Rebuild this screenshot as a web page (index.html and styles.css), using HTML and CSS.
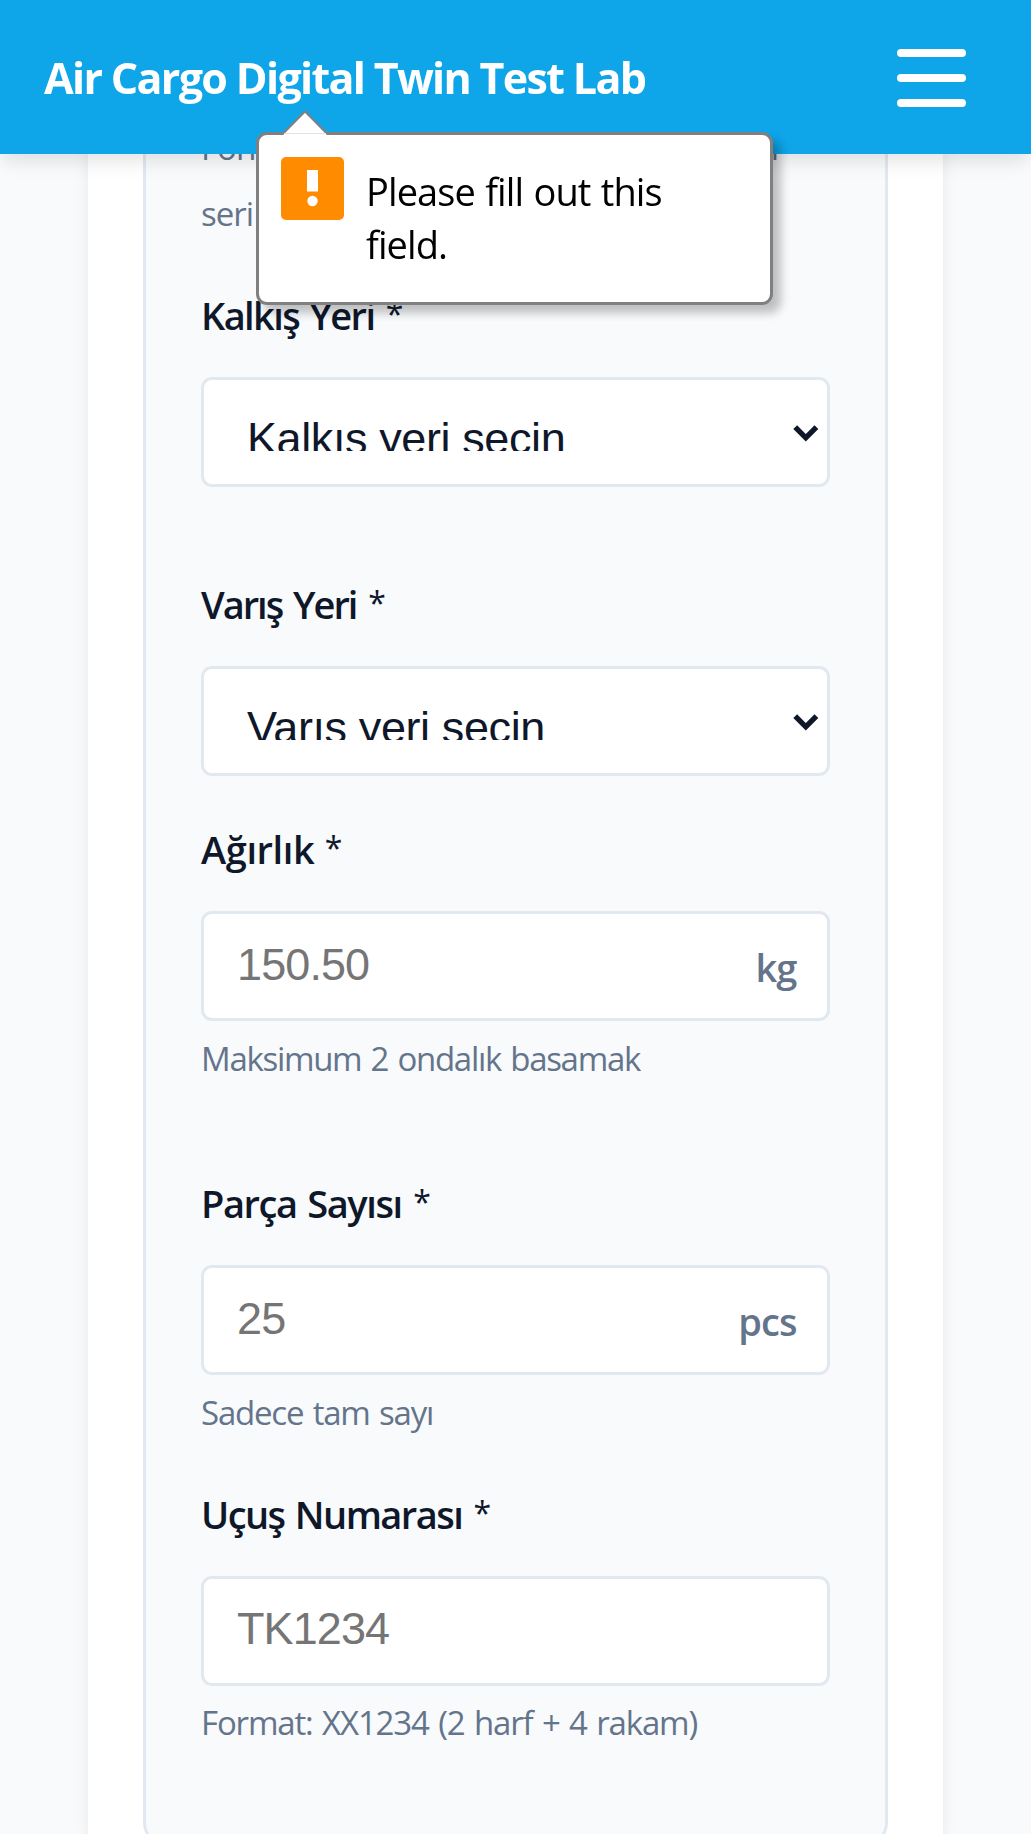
FILE: index.html
```html
<!DOCTYPE html>
<html lang="tr">
<head>
<meta charset="utf-8">
<title>Air Cargo Digital Twin Test Lab</title>
<link rel="stylesheet" href="styles.css">
</head>
<body>
<header class="topbar">
  <div class="brand">Air Cargo Digital Twin Test Lab</div>
  <div class="burger"><span></span><span></span><span></span></div>
</header>
<main class="card">
  <section class="panel">
    <p class="hint hint-top"><span class="hint-line">Format: 3 haneli prefix + 8 haneli</span>seri</p>
    <div class="field far">
      <label class="label l1">Kalkış Yeri <span class="star">*</span></label>
      <div class="control select"><span class="value">Kalkış yeri seçin</span>
        <svg class="chevron" viewBox="0 0 26 17"><path d="M2.2 2.2 12.8 12.8 23.4 2.2" fill="none" stroke="#0f172a" stroke-width="5.4"/></svg></div>
    </div>
    <div class="field near">
      <label class="label l2">Varış Yeri <span class="star">*</span></label>
      <div class="control select"><span class="value">Varış yeri seçin</span>
        <svg class="chevron" viewBox="0 0 26 17"><path d="M2.2 2.2 12.8 12.8 23.4 2.2" fill="none" stroke="#0f172a" stroke-width="5.4"/></svg></div>
    </div>
    <div class="field far">
      <label class="label l3">Ağırlık <span class="star">*</span></label>
      <div class="control"><input class="input" placeholder="150.50"><span class="unit">kg</span></div>
      <p class="hint h3">Maksimum 2 ondalık basamak</p>
    </div>
    <div class="field near">
      <label class="label l4">Parça Sayısı <span class="star">*</span></label>
      <div class="control"><input class="input" placeholder="25"><span class="unit">pcs</span></div>
      <p class="hint h4">Sadece tam sayı</p>
    </div>
    <div class="field">
      <label class="label l5">Uçuş Numarası <span class="star">*</span></label>
      <div class="control"><input class="input" placeholder="TK1234"></div>
      <p class="hint h5">Format: XX1234 (2 harf + 4 rakam)</p>
    </div>
  </section>
</main>
<div class="bubble">
  <svg class="bubble-arrow" viewBox="0 0 50 26"><path d="M3 25 25 2 47 25V26H3Z" fill="#fff"/><path d="M2.5 24 25 1.5 47.5 24" fill="none" stroke="#808080" stroke-width="2"/><path d="M4 23.5H46" stroke="#e3e3e3"/></svg>
  <svg class="bubble-icon" viewBox="0 0 63 63"><rect width="63" height="63" rx="5" fill="#ff8c00"/><rect x="26" y="13" width="11" height="21.5" fill="#fff"/><circle cx="31.5" cy="44" r="5.2" fill="#fff"/></svg>
  <div class="bubble-text">Please fill out this field.</div>
</div>
</body>
</html>
```
FILE: styles.css
```css
* { box-sizing: border-box; }
html { height: 1834px; overflow: hidden; }
body {
  margin: 0;
  height: 1834px;
  overflow: hidden;
  position: relative;
  background: #f8fafc;
  color: #0f172a;
  font-family: "Open Sans", "Noto Sans", sans-serif;
}
.topbar {
  position: fixed;
  z-index: 2;
  top: 0;
  left: 0;
  width: 100%;
  height: 154px;
  padding: 2px 65.5px 0 44px;
  display: flex;
  align-items: center;
  justify-content: space-between;
  background: #0ea5e9;
  box-shadow: 0 11px 17px -3px rgba(0, 0, 0, .1);
}
.brand {
  color: #fff;
  font-size: 43px;
  font-weight: 700;
  line-height: 60px;
  letter-spacing: -1.67px;
  white-space: nowrap;
}
.burger { display: flex; flex-direction: column; gap: 16.4px; width: 69px; }
.burger span { height: 8.5px; border-radius: 4px; background: #fff; }
.card {
  width: 855px;
  height: 1834px;
  margin-left: 88px;
  padding: 0 55px;
  overflow: hidden;
  background: #fff;
  box-shadow: 0 11px 17px -3px rgba(0, 0, 0, .1);
}
.panel {
  height: 1846px;
  padding: 115px 55px 0;
  background: #f8fafc;
  border: solid #e2e8f0;
  border-width: 0 3px 3px;
  border-radius: 0 0 23px 23px;
}
.hint {
  margin: 9.7px 0 0;
  color: #64748b;
  font-size: 33px;
  line-height: 55.7px;
  white-space: nowrap;
}
.hint-top { margin: 0 0 36.6px; line-height: 66.2px; letter-spacing: -1px; }
.hint-line { display: block; width: 577px; white-space: normal; text-align-last: justify; }
.h3 { letter-spacing: -1.3px; word-spacing: 2px; }
.h4 { letter-spacing: -1.2px; word-spacing: 2px; }
.h5 { letter-spacing: -1.15px; word-spacing: 2px; }
.field.far { margin-bottom: 86px; }
.field.near { margin-bottom: 42px; }
.label {
  display: block;
  margin-bottom: 30px;
  font-size: 38px;
  font-weight: 600;
  line-height: 63px;
  white-space: nowrap;
}
.l1 { letter-spacing: -1.6px; word-spacing: 2px; }
.l2 { letter-spacing: -2px; word-spacing: 3px; }
.l3 { letter-spacing: -.4px; }
.l4 { letter-spacing: -1.4px; word-spacing: 2px; }
.l5 { letter-spacing: -1.55px; word-spacing: 2px; }
.star {
  margin-left: 1px;
  font-size: 32px;
  font-weight: 500;
  line-height: 0;
  vertical-align: 4px;
}
.control {
  position: relative;
  display: flex;
  align-items: center;
  width: 629.4px;
  height: 110px;
  padding: 0 31px 0 33px;
  background: #fff;
  border: 3px solid #e2e8f0;
  border-radius: 11px;
}
.input {
  flex: 1;
  min-width: 0;
  height: 60px;
  margin-top: -3px;
  padding: 0;
  border: 0;
  background: none;
  font: 45px "Liberation Sans", Arial, sans-serif;
  letter-spacing: -.9px;
}
.input::placeholder { color: #757575; opacity: 1; }
.unit { margin-top: 1px; color: #64748b; font-size: 38px; font-weight: 600; letter-spacing: -1px; }
.select { padding: 0 8px 0 43px; justify-content: space-between; }
.value {
  height: 34px;
  margin-top: 4px;
  overflow: hidden;
  font: 45px/44px "Liberation Sans", Arial, sans-serif;
  letter-spacing: -.4px;
  white-space: nowrap;
}
.chevron { width: 26px; height: 17px; margin-top: 2px; }
.bubble {
  position: absolute;
  z-index: 3;
  left: 256px;
  top: 132px;
  width: 517px;
  height: 173px;
  padding: 22px;
  display: flex;
  gap: 22px;
  background: #fff;
  border: 3px solid #808080;
  border-radius: 11px;
  box-shadow: 8px 8px 10px rgba(0, 0, 0, .24);
}
.bubble-arrow { position: absolute; left: 21px; top: -25px; width: 50px; height: 26px; }
.bubble-icon { width: 63px; height: 63px; flex: none; }
.bubble-text {
  width: 330px;
  margin-top: 8px;
  color: #000;
  font-size: 38px;
  line-height: 53px;
  letter-spacing: -.9px;
  word-spacing: 1.3px;
}
```
